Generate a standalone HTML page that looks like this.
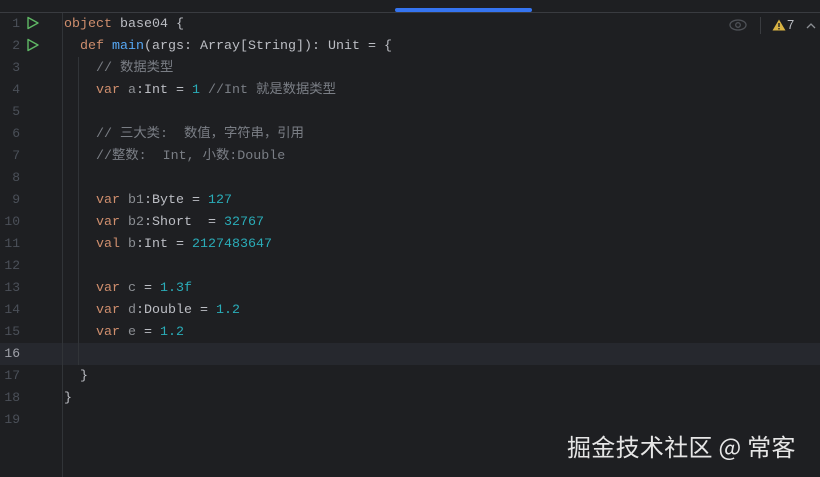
<!DOCTYPE html>
<html><head><meta charset="utf-8"><style>
html,body{margin:0;padding:0;background:#1e1f22;width:820px;height:477px;overflow:hidden;position:relative}
.top{position:absolute;left:0;top:0;width:820px;height:12px;background:#1e1f22;border-bottom:1px solid #393b40}
.blue{position:absolute;left:395px;top:8px;width:137px;height:4px;background:#3574f0;border-radius:2px}
.sep{position:absolute;left:62px;top:13px;width:1px;height:464px;background:#313438}
.guide{position:absolute;width:1px;background:#313438}
.hl{position:absolute;left:0;top:343px;width:820px;height:22px;background:#26282e}
.ln{position:absolute;left:0;width:20px;text-align:right;font:13px "Liberation Mono",monospace;color:#4b5059;line-height:22px}
.code{position:absolute;left:64px;font:13.33px "Liberation Mono","Noto Sans CJK SC",monospace;color:#bcbec4;line-height:22px;white-space:pre}
.k{color:#cf8e6d}.f{color:#56a8f5}.n{color:#2aacb8}.c{color:#7a7e85}.v{color:#8c8f94}
.wm{position:absolute;left:567px;top:428px;font:24px "Noto Sans CJK SC",sans-serif;color:#e6e6e6;letter-spacing:0.3px;white-space:nowrap}
</style></head><body>
<div class="top"></div><div class="blue"></div>
<div class="hl"></div>
<div class="sep"></div>
<div class="guide" style="left:78px;top:57px;height:308px"></div>
<svg style="position:absolute;left:26px;top:16px" width="14" height="14"><path d="M2 1.5 L12 7 L2 12.5 Z" fill="none" stroke="#5fb865" stroke-width="1.4" stroke-linejoin="round"/></svg>
<svg style="position:absolute;left:26px;top:38px" width="14" height="14"><path d="M2 1.5 L12 7 L2 12.5 Z" fill="none" stroke="#5fb865" stroke-width="1.4" stroke-linejoin="round"/></svg>
<div class="ln" style="top:13px">1<br>2<br>3<br>4<br>5<br>6<br>7<br>8<br>9<br>10<br>11<br>12<br>13<br>14<br>15<br><span style="color:#a1a3ab">16</span><br>17<br>18<br>19</div>
<div class="code" style="top:14px"><span class="k">object</span> base04 {
  <span class="k">def</span> <span class="f">main</span>(args: Array[String]): Unit = {
    <span class="c">// 数据类型</span>
    <span class="k">var</span> <span class="v">a</span>:Int = <span class="n">1</span> <span class="c">//Int 就是数据类型</span>

    <span class="c">// 三大类:  数值，字符串，引用</span>
    <span class="c">//整数:  Int, 小数:Double</span>

    <span class="k">var</span> <span class="v">b1</span>:Byte = <span class="n">127</span>
    <span class="k">var</span> <span class="v">b2</span>:Short  = <span class="n">32767</span>
    <span class="k">val</span> <span class="v">b</span>:Int = <span class="n">2127483647</span>

    <span class="k">var</span> <span class="v">c</span> = <span class="n">1.3f</span>
    <span class="k">var</span> <span class="v">d</span>:Double = <span class="n">1.2</span>
    <span class="k">var</span> <span class="v">e</span> = <span class="n">1.2</span>

  }
}
</div>
<svg style="position:absolute;left:729px;top:19px" width="18" height="12"><ellipse cx="9" cy="6" rx="8" ry="5" fill="none" stroke="#4e5157" stroke-width="1.3"/><circle cx="9" cy="6" r="2.3" fill="none" stroke="#4e5157" stroke-width="1.3"/></svg>
<div style="position:absolute;left:760px;top:17px;width:1px;height:17px;background:#3a3c40"></div>
<svg style="position:absolute;left:772px;top:19px" width="14" height="12"><path d="M7 0.5 L13.5 11.5 L0.5 11.5 Z" fill="#d9b343"/><rect x="6.3" y="4" width="1.4" height="4" fill="#1e1f22"/><rect x="6.3" y="9" width="1.4" height="1.4" fill="#1e1f22"/></svg>
<div style="position:absolute;left:787px;top:17px;font:13px 'Liberation Sans',sans-serif;color:#bcbec4">7</div>
<svg style="position:absolute;left:806px;top:22px" width="10" height="7"><path d="M1 6 L5 2 L9 6" fill="none" stroke="#8c8f94" stroke-width="1.3"/></svg>
<div class="wm">掘金技术社区 @ 常客</div>
</body></html>
